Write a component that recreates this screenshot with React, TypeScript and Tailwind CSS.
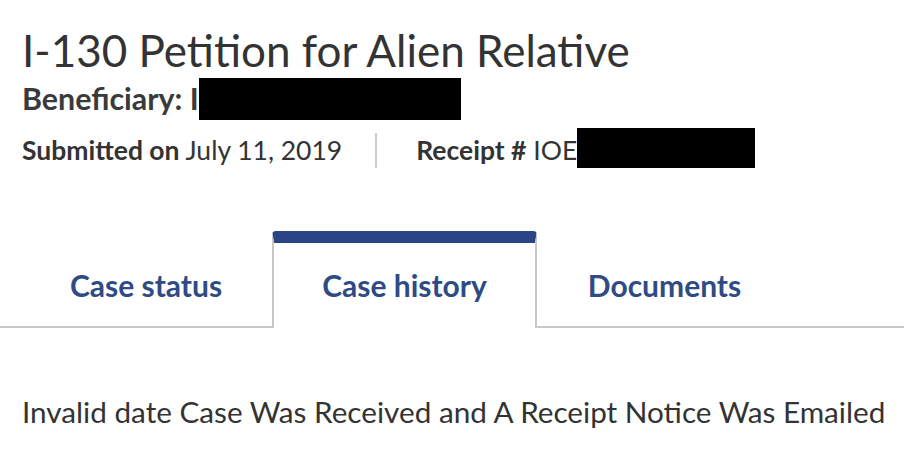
export default function App() {
  const font = { fontFamily: 'Lato, "Noto Sans", sans-serif' }
  return (
    <div className="w-[904px] h-[458px] bg-white text-[#333333] overflow-hidden" style={font}>
      <div className="px-[22px] pt-[22px]">
        <h1 className="text-[44px] leading-[56px] font-normal">I-130 Petition for Alien Relative</h1>
        <p className="text-[30.4px] leading-[41px] font-bold text-[#3a3a3a] whitespace-nowrap">
          Beneficiary: I
          <span className="inline-block w-[262px] h-[42px] bg-black align-[-10px]" />
        </p>
        <div className="flex items-start h-[60px] text-[26.5px] leading-[60px] whitespace-nowrap">
          <span>
            <span className="font-bold">Submitted on</span> July 11, 2019
          </span>
          <span className="mt-[13px] ml-[33px] mr-[39px] w-[2px] h-[35px] bg-[#cccccc]" />
          <span>
            <span className="font-bold">Receipt #</span> IOE
            <span className="inline-block w-[178px] h-[40px] bg-black align-[-8px]" />
          </span>
        </div>
      </div>

      <div className="flex mt-[51px] pl-[20px] border-b-2 border-[#c8c8c8] h-[97px] text-[30px] leading-[40px] font-bold text-[#2f4b85]">
        <div className="w-[252px] text-center pt-[34px]">Case status</div>
        <div className="w-[265px] h-[97px] -mb-[2px] bg-white border-x-2 border-[#c8c8c8] border-t-[12px] border-t-[#2b4486] rounded-t-[4px] text-center pt-[22px]">
          Case history
        </div>
        <div className="w-[255px] text-center pt-[34px]">Documents</div>
      </div>

      <p className="px-[22px] mt-[64px] text-[29.7px] leading-[40px] whitespace-nowrap">
        Invalid date Case Was Received and A Receipt Notice Was Emailed
      </p>
    </div>
  )
}
